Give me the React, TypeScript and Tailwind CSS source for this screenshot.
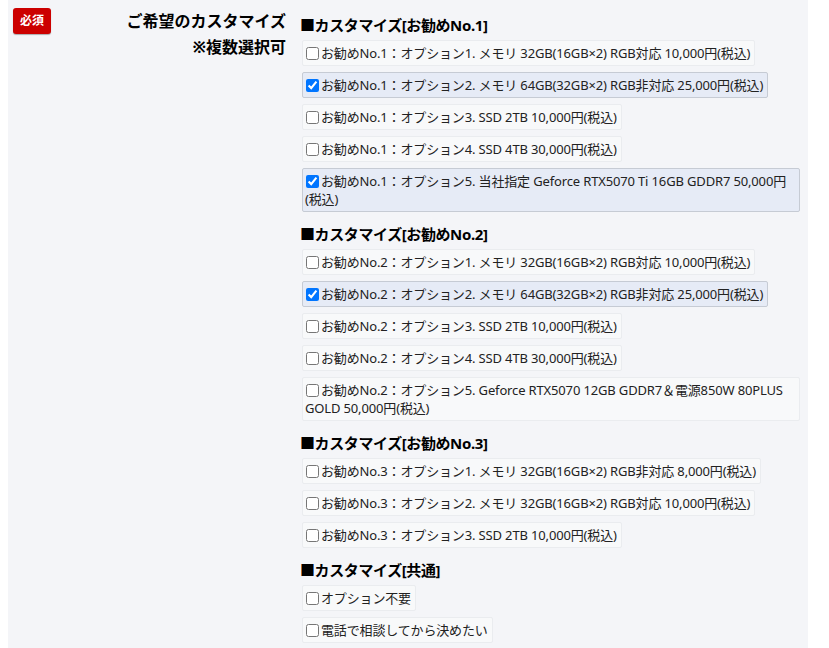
import { useState } from "react";

interface Option {
  id: string;
  label: string;
}

interface Group {
  title: string;
  options: Option[];
}

const groups: Group[] = [
  {
    title: "■カスタマイズ[お勧めNo.1]",
    options: [
      { id: "1-1", label: "お勧めNo.1：オプション1. メモリ 32GB(16GB×2) RGB対応 10,000円(税込)" },
      { id: "1-2", label: "お勧めNo.1：オプション2. メモリ 64GB(32GB×2) RGB非対応 25,000円(税込)" },
      { id: "1-3", label: "お勧めNo.1：オプション3. SSD 2TB 10,000円(税込)" },
      { id: "1-4", label: "お勧めNo.1：オプション4. SSD 4TB 30,000円(税込)" },
      { id: "1-5", label: "お勧めNo.1：オプション5. 当社指定 Geforce RTX5070 Ti 16GB GDDR7 50,000円(税込)" },
    ],
  },
  {
    title: "■カスタマイズ[お勧めNo.2]",
    options: [
      { id: "2-1", label: "お勧めNo.2：オプション1. メモリ 32GB(16GB×2) RGB対応 10,000円(税込)" },
      { id: "2-2", label: "お勧めNo.2：オプション2. メモリ 64GB(32GB×2) RGB非対応 25,000円(税込)" },
      { id: "2-3", label: "お勧めNo.2：オプション3. SSD 2TB 10,000円(税込)" },
      { id: "2-4", label: "お勧めNo.2：オプション4. SSD 4TB 30,000円(税込)" },
      { id: "2-5", label: "お勧めNo.2：オプション5. Geforce RTX5070 12GB GDDR7＆電源850W 80PLUS GOLD 50,000円(税込)" },
    ],
  },
  {
    title: "■カスタマイズ[お勧めNo.3]",
    options: [
      { id: "3-1", label: "お勧めNo.3：オプション1. メモリ 32GB(16GB×2) RGB非対応 8,000円(税込)" },
      { id: "3-2", label: "お勧めNo.3：オプション2. メモリ 32GB(16GB×2) RGB対応 10,000円(税込)" },
      { id: "3-3", label: "お勧めNo.3：オプション3. SSD 2TB 10,000円(税込)" },
    ],
  },
  {
    title: "■カスタマイズ[共通]",
    options: [
      { id: "c-1", label: "オプション不要" },
      { id: "c-2", label: "電話で相談してから決めたい" },
    ],
  },
];

export default function App() {
  const [checked, setChecked] = useState<Record<string, boolean>>({
    "1-2": true,
    "1-5": true,
    "2-2": true,
  });

  const toggle = (id: string) => setChecked((c) => ({ ...c, [id]: !c[id] }));

  return (
    <div
      className="min-h-[648px] bg-white px-2 text-[#222]"
      style={{ fontFamily: '"Noto Sans", "Noto Sans CJK JP", sans-serif' }}
    >
      <div className="flex w-[800px] bg-[#f4f5f8]">
        {/* label column */}
        <div className="w-[284px] shrink-0 pt-2 pl-[5px] pr-[6px]">
          <div className="flex items-start justify-between">
            <span className="flex h-[26px] w-[38px] items-center justify-center rounded-[3px] bg-[#cc0000] text-[12px] font-bold text-white shadow-[0_1px_1px_rgba(0,0,0,0.3)]">
              必須
            </span>
            <div className="text-right text-[16px] font-bold leading-[26px] text-black">
              <div>ご希望のカスタマイズ</div>
              <div>※複数選択可</div>
            </div>
          </div>
        </div>

        {/* options column */}
        <div className="flex-1 pl-2 pr-2 pt-[14px] pb-[3px]">
          {groups.map((g, gi) => (
            <div key={g.title} className={gi === 0 ? "" : "mt-[5px]"}>
              <h3 className="mb-[4px] text-[15px] font-bold leading-[22px] tracking-[-0.4px] text-black">
                {g.title}
              </h3>
              <div className="flex flex-col items-start gap-[6px] pb-[6px]">
                {g.options.map((o) => {
                  const on = !!checked[o.id];
                  return (
                    <label
                      key={o.id}
                      className={
                        "ml-[2px] block cursor-pointer rounded-[2px] border py-[3px] pl-[2px] pr-[4px] text-[13px] leading-[18px] tracking-[-0.15px] " +
                        (on
                          ? "border-[#c6cbd4] bg-[#e6ebf6]"
                          : "border-[#eaecef] bg-[#f8f9fa]")
                      }
                    >
                      <input
                        type="checkbox"
                        checked={on}
                        onChange={() => toggle(o.id)}
                        className="mr-[2px] ml-[1px] h-[13px] w-[13px] align-[-2px]"
                      />
                      {o.label}
                    </label>
                  );
                })}
              </div>
            </div>
          ))}
        </div>
      </div>
    </div>
  );
}
